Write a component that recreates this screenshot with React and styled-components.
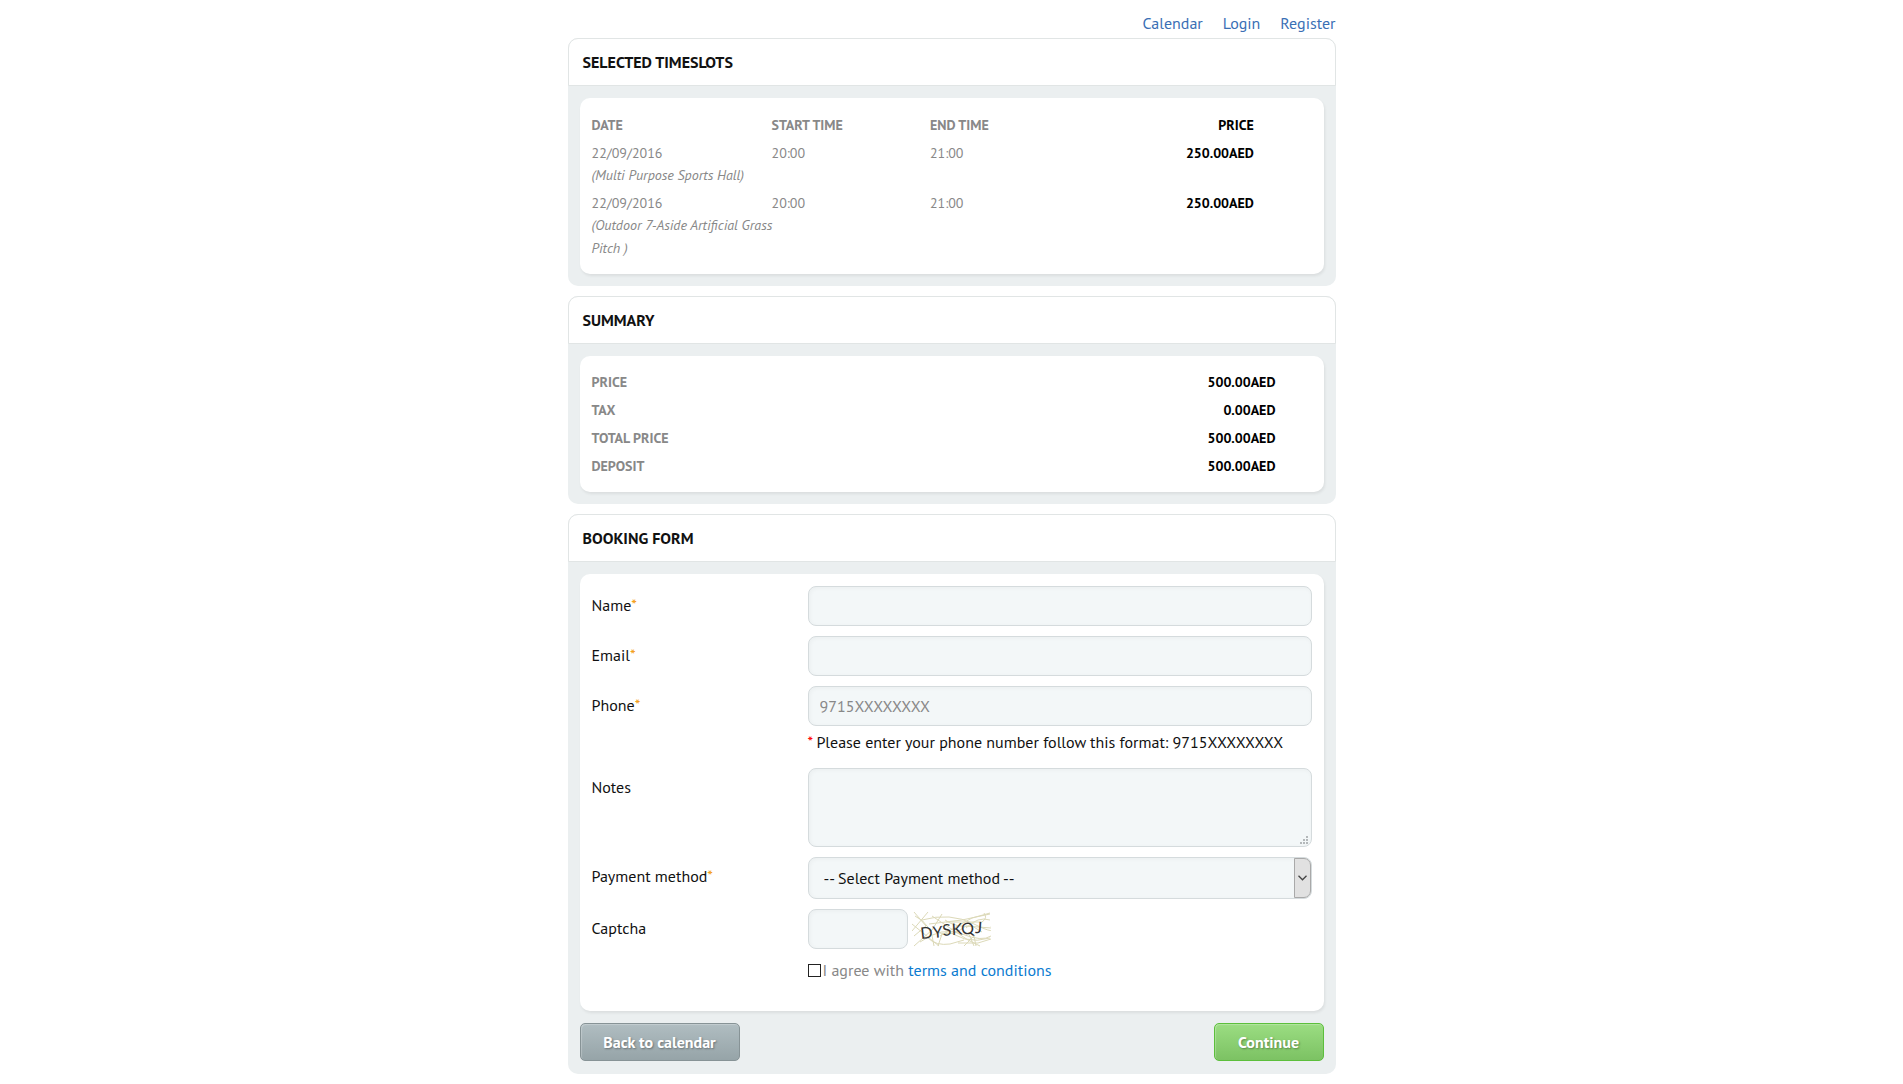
import React from 'react'
import styled, { createGlobalStyle } from 'styled-components'

const GlobalStyle = createGlobalStyle`
  *, *::before, *::after {
    box-sizing: border-box;
  }
  body {
    margin: 0;
    background: #fff;
    color: #111;
    font-family: 'PT Sans', Lato, sans-serif;
    font-size: 16px;
    line-height: 24px;
  }
  input, select, textarea, button {
    font: inherit;
    color: inherit;
    margin: 0;
  }
`

const Page = styled.div`
  max-width: 768px;
  margin: 0 auto;
  padding-bottom: 10px;
`

const TopNav = styled.nav`
  display: flex;
  justify-content: flex-end;
  gap: 20px;
  padding: 11px 0 3px;
`

const NavLink = styled.a`
  color: #3a6fb5;
  text-decoration: none;
`

const Section = styled.section`
  margin-bottom: 10px;
  border-radius: 10px;
  background: #ebeff0;
`

const SectionTitle = styled.h2`
  height: 48px;
  margin: 0;
  padding: 0 14px;
  border: 1px solid #e1e5e5;
  border-radius: 10px 10px 0 0;
  background: #fff;
  color: #111;
  font-size: 16px;
  font-weight: 700;
  line-height: 46px;
  text-transform: uppercase;
`

const SectionBody = styled.div`
  padding: 12px;
`

const Panel = styled.div`
  padding: ${p => p.$top || 12}px 12px ${p => p.$bottom || 12}px;
  border-radius: 10px;
  background: #fff;
  box-shadow: 1px 2px 3px rgba(0, 0, 0, 0.07);
`

const Table = styled.table`
  width: 100%;
  border-collapse: collapse;
  table-layout: fixed;
  color: #888;
  font-size: 14px;
  line-height: 22px;
`

const cell = `
  padding: 3px 0 2px;
  text-align: left;
  vertical-align: baseline;
`

const Th = styled.th`
  ${cell}
  width: ${p => p.$width};
  font-weight: 700;
  line-height: 23px;
  text-transform: uppercase;
`

const Td = styled.td`
  ${cell}
`

const PriceTh = styled(Th)`
  color: #000;
  text-align: right;
`

const PriceTd = styled(Td)`
  width: ${p => p.$width};
  color: #000;
  font-weight: 700;
  text-align: right;
`

// long venue names may run a little into the next column
const Venue = styled.em`
  display: block;
  margin-right: -8px;
  line-height: 23px;
`

const FormRow = styled.div`
  display: grid;
  grid-template-columns: 3fr 7fr;
  margin-bottom: 10px;
`

const Label = styled.label`
  line-height: 38px;
`

const Required = styled.span`
  color: #f39c12;
`

const Warn = styled.span`
  color: #f00;
`

const field = `
  display: block;
  width: 100%;
  border: 1px solid #d5dbdd;
  border-radius: 8px;
  background: #f3f7f8;
  box-shadow: inset 1px 1px 4px rgba(0, 0, 0, 0.04);
  outline: none;
`

const Input = styled.input`
  ${field}
  height: 40px;
  padding: 0 11px;
  &::placeholder {
    color: #888;
    opacity: 1;
  }
`

const CaptchaInput = styled(Input)`
  width: 100px;
`

const Textarea = styled.textarea`
  ${field}
  height: 79px;
  padding: 8px 11px;
  resize: none;
`

const Select = styled.select`
  ${field}
  height: 42px;
  padding: 0 30px 0 15px;
  appearance: none;
`

const FieldWrap = styled.div`
  position: relative;
`

const SelectArrow = styled.span`
  position: absolute;
  top: 1px;
  right: 1px;
  bottom: 1px;
  width: 17px;
  display: flex;
  align-items: center;
  justify-content: center;
  border: 1px solid #a9a9a9;
  border-radius: 0 7px 7px 0;
  background: #e1e1e1;
  pointer-events: none;
`

const Grip = styled.svg`
  position: absolute;
  right: 4px;
  bottom: 3px;
  pointer-events: none;
`

const Hint = styled.div`
  line-height: 32px;
`

const CaptchaRow = styled.div`
  display: flex;
  align-items: center;
  gap: 4px;
`

const AgreeRow = styled.div`
  display: flex;
  align-items: center;
  gap: 2px;
  margin-left: 30%;
  color: #888;
  line-height: 22px;
`

const Checkbox = styled.input`
  width: 13px;
  height: 13px;
  border: 1px solid #222;
  background: #fff;
  appearance: none;
  &:checked {
    background: #222;
    box-shadow: inset 0 0 0 2px #fff;
  }
`

const TermsLink = styled.a`
  color: #0a7bd0;
  text-decoration: none;
`

const Actions = styled.div`
  display: flex;
  justify-content: space-between;
  padding: 12px 0 1px;
`

const Button = styled.button`
  height: 38px;
  min-width: ${p => (p.$primary ? 110 : 160)}px;
  padding: 0 16px;
  border: 1px solid ${p => (p.$primary ? '#5cbf3c' : '#879396')};
  border-radius: 5px;
  background: ${p => (p.$primary
    ? 'linear-gradient(#9bdd82, #7cc263)'
    : 'linear-gradient(#b0bdc1, #96a4a8)')};
  box-shadow: inset 1px 1px 1px rgba(255, 255, 255, 0.25);
  color: #fff;
  font-weight: 700;
  text-shadow: 1px 1px 2px rgba(0, 0, 0, 0.35);
  cursor: pointer;
`

const slots = [
  { date: '22/09/2016', venue: '(Multi Purpose Sports Hall)', start: '20:00', end: '21:00', price: '250.00AED' },
  { date: '22/09/2016', venue: '(Outdoor 7-Aside Artificial Grass Pitch )', start: '20:00', end: '21:00', price: '250.00AED' },
]

const totals = [
  ['Price', '500.00AED'],
  ['Tax', '0.00AED'],
  ['Total price', '500.00AED'],
  ['Deposit', '500.00AED'],
]

const Captcha = () => (
  <svg width="79" height="35" viewBox="0 0 79 35" role="img" aria-label="Captcha code">
    <g fill="none" stroke="#dcd9b8" strokeWidth="1">
      <path d="M2 0 L14 14 L2 24 M0 19 L16 0 M3 4 Q20 12 22 34 M0 12 L27 34 M2 34 L20 18 L30 2" />
      <path d="M10 8 Q38 0 62 12 T79 14 M8 30 Q30 14 50 22 T79 24 M20 4 L56 28 M17 12 L50 8 L78 2" />
      <path d="M30 14 Q52 34 78 26 M28 24 L60 6 L78 1 M34 10 L70 10 Q76 6 72 1 M46 31 L66 31 L79 27" />
      <path d="M54 16 Q66 4 78 8 M56 20 L62 34 M52 34 L62 24 L64 34 M56 28 L68 34 M24 20 Q40 26 54 14 L79 16" />
      <path d="M16 26 Q24 34 38 32 L52 28 M26 34 L30 22 M33 8 Q44 16 60 14 L70 20" />
    </g>
    <g fill="#333" fontFamily="Lato, sans-serif" fontSize="16">
      <text x="9" y="27" transform="rotate(-6 9 27)">D</text>
      <text x="21" y="26" transform="rotate(-4 21 26)">Y</text>
      <text x="31" y="24" transform="rotate(-6 31 24)">S</text>
      <text x="40" y="23" transform="rotate(-3 40 23)">K</text>
      <text x="50" y="23" transform="rotate(-8 50 23)">Q</text>
      <text x="63" y="21" transform="rotate(4 63 21)">J</text>
    </g>
  </svg>
)

class BookingForm extends React.Component {
  render() {
    return (
      <form onSubmit={e => e.preventDefault()}>
        <Panel $bottom={30}>
          <FormRow>
            <Label htmlFor="name">Name<Required>*</Required></Label>
            <Input id="name" type="text" />
          </FormRow>
          <FormRow>
            <Label htmlFor="email">Email<Required>*</Required></Label>
            <Input id="email" type="email" />
          </FormRow>
          <FormRow>
            <Label htmlFor="phone">Phone<Required>*</Required></Label>
            <div>
              <Input id="phone" type="tel" placeholder="9715XXXXXXXX" />
              <Hint><Warn>*</Warn> Please enter your phone number follow this format: 9715XXXXXXXX</Hint>
            </div>
          </FormRow>
          <FormRow>
            <Label htmlFor="notes">Notes</Label>
            <FieldWrap>
              <Textarea id="notes" />
              <Grip width="8" height="8" fill="#b4b8ba" aria-hidden="true">
                <path d="M6 0h2v2h-2z M3 3h2v2h-2z M6 3h2v2h-2z M0 6h2v2h-2z M3 6h2v2h-2z M6 6h2v2h-2z" />
              </Grip>
            </FieldWrap>
          </FormRow>
          <FormRow>
            <Label htmlFor="payment">Payment method<Required>*</Required></Label>
            <FieldWrap>
              <Select id="payment">
                <option>-- Select Payment method --</option>
              </Select>
              <SelectArrow>
                <svg width="9" height="6" fill="none" stroke="#444" strokeWidth="1.3" aria-hidden="true">
                  <path d="M0.5 0.8 L4.5 4.8 L8.5 0.8" />
                </svg>
              </SelectArrow>
            </FieldWrap>
          </FormRow>
          <FormRow>
            <Label htmlFor="captcha">Captcha</Label>
            <CaptchaRow>
              <CaptchaInput id="captcha" type="text" />
              <Captcha />
            </CaptchaRow>
          </FormRow>
          <AgreeRow>
            <Checkbox id="agree" type="checkbox" />
            <label htmlFor="agree">I agree with <TermsLink href="#terms">terms and conditions</TermsLink></label>
          </AgreeRow>
        </Panel>
        <Actions>
          <Button type="button">Back to calendar</Button>
          <Button type="submit" $primary>Continue</Button>
        </Actions>
      </form>
    )
  }
}

class App extends React.Component {
  render() {
    return (
      <Page>
        <GlobalStyle />
        <TopNav>
          <NavLink href="#calendar">Calendar</NavLink>
          <NavLink href="#login">Login</NavLink>
          <NavLink href="#register">Register</NavLink>
        </TopNav>

        <Section>
          <SectionTitle>Selected timeslots</SectionTitle>
          <SectionBody>
            <Panel $top={13}>
              <Table>
                <thead>
                  <tr>
                    <Th $width="25%">Date</Th>
                    <Th $width="22%">Start time</Th>
                    <Th $width="22%">End time</Th>
                    <PriceTh $width="23%">Price</PriceTh>
                    <Td />
                  </tr>
                </thead>
                <tbody>
                  {slots.map(slot => (
                    <tr key={slot.venue}>
                      <Td>{slot.date}<Venue>{slot.venue}</Venue></Td>
                      <Td>{slot.start}</Td>
                      <Td>{slot.end}</Td>
                      <PriceTd>{slot.price}</PriceTd>
                      <Td />
                    </tr>
                  ))}
                </tbody>
              </Table>
            </Panel>
          </SectionBody>
        </Section>

        <Section>
          <SectionTitle>Summary</SectionTitle>
          <SectionBody>
            <Panel>
              <Table>
                <tbody>
                  {totals.map(([name, value]) => (
                    <tr key={name}>
                      <Th scope="row" $width="50%">{name}</Th>
                      <PriceTd $width="45%">{value}</PriceTd>
                      <Td />
                    </tr>
                  ))}
                </tbody>
              </Table>
            </Panel>
          </SectionBody>
        </Section>

        <Section>
          <SectionTitle>Booking form</SectionTitle>
          <SectionBody>
            <BookingForm />
          </SectionBody>
        </Section>
      </Page>
    )
  }
}

export default App
